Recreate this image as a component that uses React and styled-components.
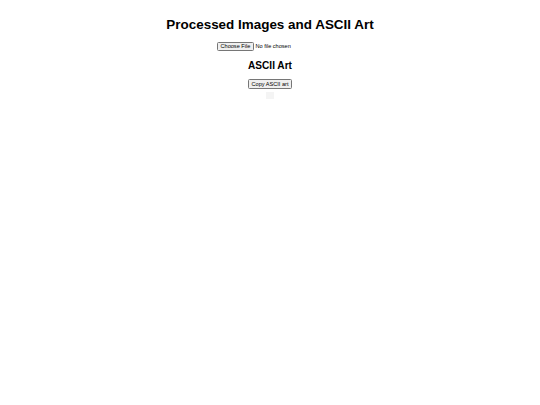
import styled, { createGlobalStyle } from "styled-components";

const GlobalStyle = createGlobalStyle`
  body {
    margin: 0;
    background: #fff;
    font-family: "Liberation Sans", Arial, sans-serif;
    color: #000;
  }
`;

const App = () => {
  return (
    <Page>
      <GlobalStyle />
      <Title>Processed Images and ASCII Art</Title>
      <FileInput type="file" accept="image/*" />
      <SubTitle>ASCII Art</SubTitle>
      <CopyButton>Copy ASCII art</CopyButton>
      <AsciiBox></AsciiBox>
    </Page>
  );
};

// the whole page is rendered small, as if zoomed out
const Page = styled.div`
  zoom: 0.42;
  padding: 20px 8px 8px;
  text-align: center;
`;

const Title = styled.h1`
  font-size: 32px;
  font-weight: bold;
  margin: 21px 0 23px;
`;

const FileInput = styled.input`
  font-family: "Liberation Sans", Arial, sans-serif;
  font-size: 13.33px;
`;

const SubTitle = styled.h2`
  font-size: 24px;
  font-weight: bold;
  margin: 22px 0 20px;
`;

const CopyButton = styled.button`
  font-family: "Liberation Sans", Arial, sans-serif;
  font-size: 13.33px;
  padding: 2px 6px;
`;

const AsciiBox = styled.pre`
  width: fit-content;
  margin: 7px auto;
  padding: 9px;
  background: #f4f4f4;
`;

export default App;
